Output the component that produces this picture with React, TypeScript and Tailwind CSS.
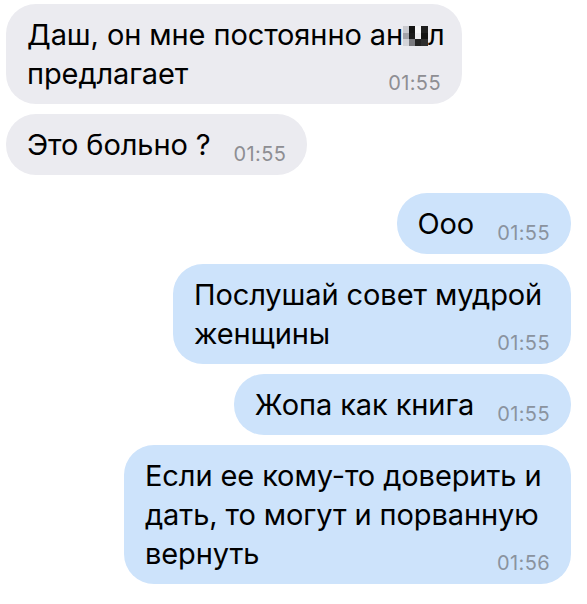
import React from 'react';

type Msg = {
    lines: React.ReactNode[];
    time: string;
    out: boolean;
    width?: string;
};

// pixelated (censored) chunk inside the first message
const Mosaic: React.FC = () => (
    <svg width="25" height="20" viewBox="0 0 25 20" className="inline-block align-[-1px]">
        <rect x="0" y="0" width="6" height="7" fill="#c9c9ce" />
        <rect x="6" y="0" width="6" height="7" fill="#141414" />
        <rect x="12" y="0" width="6" height="7" fill="#f4f4f6" />
        <rect x="18" y="0" width="7" height="7" fill="#1e1e1e" />
        <rect x="0" y="7" width="6" height="6" fill="#a2a2a8" />
        <rect x="6" y="7" width="6" height="6" fill="#1a1a1a" />
        <rect x="12" y="7" width="6" height="6" fill="#ececef" />
        <rect x="18" y="7" width="7" height="6" fill="#121212" />
        <rect x="0" y="13" width="6" height="7" fill="#d3d3d8" />
        <rect x="6" y="13" width="6" height="7" fill="#7a7a7f" />
        <rect x="12" y="13" width="6" height="7" fill="#232323" />
        <rect x="18" y="13" width="7" height="7" fill="#2e2e2e" />
    </svg>
);

const messages: Msg[] = [
    { lines: [<>Даш, он мне постоянно ан<Mosaic />л</>, 'предлагает'], time: '01:55', out: false, width: 'w-[456px]' },
    { lines: ['Это больно ?'], time: '01:55', out: false },
    { lines: ['Ооо'], time: '01:55', out: true },
    { lines: ['Послушай совет мудрой', 'женщины'], time: '01:55', out: true, width: 'w-[398px]' },
    { lines: ['Жопа как книга'], time: '01:55', out: true },
    { lines: ['Если ее кому-то доверить и', 'дать, то могут и порванную', 'вернуть'], time: '01:56', out: true, width: 'w-[447px]' },
];

const Bubble: React.FC<{ msg: Msg }> = ({ msg }) => {
    const last = msg.lines.length - 1;
    return (
        <div
            className={`rounded-[30px] px-[21px] pt-[11px] pb-[11px] text-[29px] leading-[39px] tracking-[-0.1px] text-black ${
                msg.out ? 'self-end bg-[#cde3fb]' : 'self-start bg-[#ebebf0]'
            } ${msg.width ?? ''}`}
        >
            {msg.lines.map((line, i) =>
                i < last ? (
                    <div key={i} className="whitespace-nowrap">{line}</div>
                ) : (
                    <div key={i} className="flex items-baseline justify-between whitespace-nowrap">
                        <span>{line}</span>
                        <span
                            className={`ml-[23px] text-[20px] leading-none tracking-[0.4px] translate-y-[6px] ${
                                msg.out ? 'text-[#8a939f]' : 'text-[#8e8e93]'
                            }`}
                        >
                            {msg.time}
                        </span>
                    </div>
                )
            )}
        </div>
    );
};

export default function App() {
    return (
        <div className="w-[587px] h-[604px] overflow-hidden bg-white pt-1 pl-[6px] pr-4 flex flex-col font-['Inter',sans-serif]">
            {messages.map((m, i) => (
                <div key={i} className={`flex flex-col ${i === 0 ? '' : i === 2 ? 'mt-[18px]' : 'mt-[10px]'}`}>
                    <Bubble msg={m} />
                </div>
            ))}
        </div>
    );
}
